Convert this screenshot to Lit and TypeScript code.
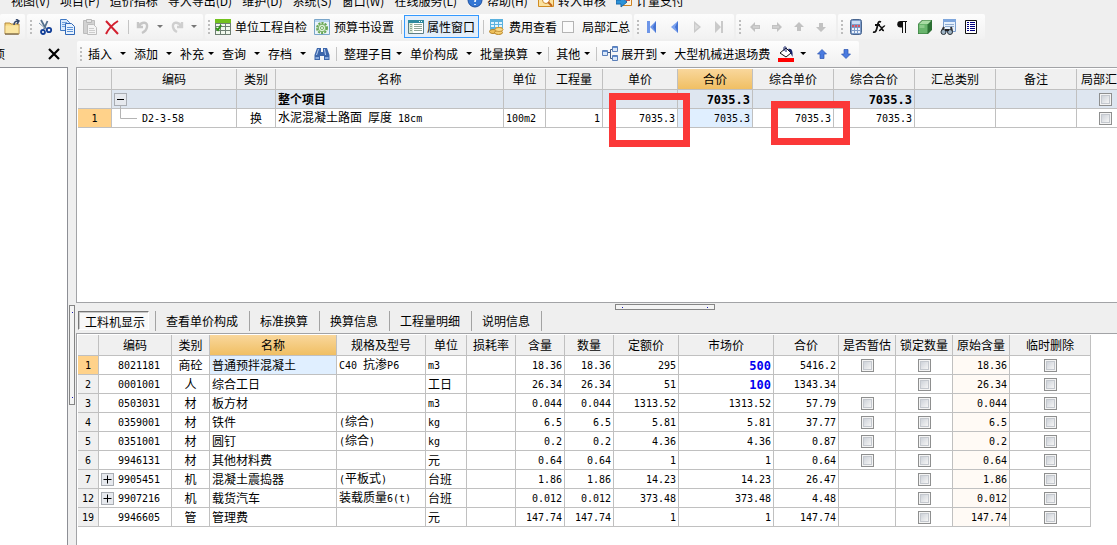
import { LitElement, html, svg, css, nothing, TemplateResult } from "lit";
import { customElement, state } from "lit/decorators.js";
import { classMap } from "lit/directives/class-map.js";
import { styleMap } from "lit/directives/style-map.js";

const shapes: Record<string, TemplateResult> = {
  folder: svg`<path d="M1 4h5l1 1h8v10H1z" fill="#f5d57c" stroke="#b58a3c"/><path d="M1.500 6.500h13v8h-13z" fill="#fbe6a2"/><path d="M10 6c0-3 1-4 4-4M12 0l3 2-2 3" fill="none" stroke="#34486b" stroke-width="1.500"/><path d="M1 15h13.500" stroke="#5d5140"/>`,
  cut: svg`<path d="M3 1l5 9M9.500 2L6 10" fill="none" stroke="#54718e" stroke-width="1.800"/><path d="M1 4l7 6" stroke="#7f97aa"/><circle cx="5" cy="13" r="2" fill="none" stroke="#123f98" stroke-width="1.800"/><circle cx="11" cy="11" r="2.200" fill="none" stroke="#123f98" stroke-width="1.800"/>`,
  copy: svg`<path d="M.5.500h6l3 3v8h-9z" fill="#d9e9fb" stroke="#3f78c3"/><path d="M2 3.500h5M2 5.500h5M2 7.500h5" stroke="#6fa0dc"/><path d="M5.500 4.500h6l3 3v8h-9z" fill="#e8f2fd" stroke="#3068b8"/><path d="M7 8.500h6M7 10.500h6M7 12.500h6" stroke="#5c92d6"/>`,
  paste: svg`<path d="M1.500 1.500h11v13h-11z" fill="#d2d2d2" stroke="#bcbcbc"/><path d="M4.500.500h5v3h-5z" fill="#e6e6e6" stroke="#b8b8b8"/><path d="M5.500 5.500h6l3 3v7h-9z" fill="#f4f4f4" stroke="#bebebe"/><path d="M7 9.500h5M7 11.500h6M7 13.500h6" stroke="#ccc"/>`,
  remove: svg`<path d="M2 2l12 13M14 2C9 5 5 9 2 15" fill="none" stroke="#d3202f" stroke-width="2"/>`,
  undo: svg`<path d="M3 3v5h5M3.500 7.500C7 2 13 3 12 8c-.5 3-3 5-5 6" fill="none" stroke="#c6c6c6" stroke-width="2.400"/>`,
  redo: svg`<path d="M13 3v5H8M12.500 7.500C9 2 3 3 4 8c.5 3 2 4 4 5" fill="none" stroke="#cfcfcf" stroke-width="2.400"/>`,
  sheet: svg`<path d="M0 1h16v15H0z" fill="#6e7f72"/><path d="M0 0h16v4H0z" fill="#72c21d"/><path d="M1 5h4v2H1zM6 5h4v2H6zM11 5h4v2h-4zM6 8h4v3H6zM11 8h4v3h-4zM6 12h4v3H6zM11 12h4v3h-4zM1 12h4v3H1z" fill="#f1f8ee"/><path d="M1 8h4v3H1z" fill="#fff"/><path d="M1 9l2 2 3-5" fill="none" stroke="#2f9415" stroke-width="1.800"/>`,
  gear: svg`<path d="M.5.500h15v15H.5z" fill="#eaf4fb" stroke="#79a5c9"/><path d="M1 1h14v2H1z" fill="#b6d6ef"/><circle cx="8" cy="9" r="5" fill="#fff" stroke="#68a755" stroke-width="2" stroke-dasharray="2.200 1"/><circle cx="8" cy="9" r="3.800" fill="#dff0d9" stroke="#6fac5d"/><circle cx="8" cy="9" r="1.500" fill="#fff" stroke="#6fac5d"/>`,
  panel: svg`<path d="M.5 1.500h15v13H.5z" fill="#fff" stroke="#5c7d84"/><path d="M0 1h16v3H0z" fill="#2f8aa0"/><path d="M1 4h4v10H1z" fill="#dcebd8"/><path d="M2 5.500h2M2 7.500h2M2 9.500h2M2 11.500h2M6 5.500h8M6 7.500h8M6 9.500h8M6 11.500h8" stroke="#8fa596"/><path d="M11 2.500h1M13 2.500h1" stroke="#fff"/>`,
  cost: svg`<path d="M1 0h13v11H1z" fill="#5ab2df"/><path d="M2 3h3v2H2zM6 3h3v2H6zM10 3h3v2h-3zM2 6h3v2H2zM6 6h3v2H6zM10 6h3v2h-3z" fill="#e2f4fd"/><ellipse cx="4" cy="12.500" rx="3.500" ry="2" fill="#efc05a" stroke="#b78427"/><path d="M7 8h6v6H7z" fill="#eab650"/><ellipse cx="9.500" cy="13.500" rx="4" ry="2" fill="#f4cc6f" stroke="#b78427"/><ellipse cx="10" cy="10.500" rx="4" ry="2" fill="#fbdc8b" stroke="#c7953a"/>`,
  first: svg`<path d="M2 2h3v12H2z" fill="#6e96e8"/><path d="M11 2v12L5 8z" fill="#6e96e8"/><path d="M11 2v12L8 8z" fill="#4473d2"/>`,
  prev: svg`<path d="M11 2v12L4 8z" fill="#7ba2ef"/><path d="M11 2v12L8 8z" fill="#4473d2"/>`,
  next: svg`<path d="M5 2v12l7-6z" fill="#cacaca"/><path d="M6 5v6l4-3z" fill="#dcdcdc"/>`,
  last: svg`<path d="M4 2v12l6-6zM10 2h2v12h-2z" fill="#cacaca"/>`,
  left: svg`<path d="M3 8l5-5v3h5v4H8v3z" fill="#c2c2c2"/><path d="M6 8h6" stroke="#dedede"/>`,
  right: svg`<path d="M13 8L8 3v3H3v4h5v3z" fill="#c2c2c2"/><path d="M4 8h6" stroke="#dedede"/>`,
  up: svg`<path d="M8 3l5 5h-3v4H6V8H3z" fill="#c2c2c2"/>`,
  down: svg`<path d="M8 13L3 8h3V4h4v4h3z" fill="#c2c2c2"/>`,
  calc: svg`<rect x="2.500" y=".5" width="11" height="15" rx="2" fill="#7d9bc8" stroke="#48658f"/><path d="M4 2h8v3H4z" fill="#c9dcf4"/><path d="M4 6h2v2H4zM7 6h2v2H7zM10 6h2v2h-2z" fill="#d65361"/><path d="M4 9h2v2H4zM7 9h2v2H7zM10 9h2v2h-2zM4 12h2v2H4zM7 12h2v2H7zM10 12h2v2h-2z" fill="#eaf2fc"/>`,
  fx: svg`<path d="M10 3c-3-1.500-3 2-3.800 5S5 14 2 13M4 6h5" fill="none" stroke="#111" stroke-width="1.800"/><path d="M8 7c3-1 2 5 5 4.500M14 7c-2-1-4 5-6 4.500" fill="none" stroke="#111" stroke-width="1.500"/>`,
  para: svg`<path d="M7 2.500h6M8.500 2v12M11.500 2v12" fill="none" stroke="#111"/><path d="M8 2H6.500a3 3 0 000 6.500H8z" fill="#111"/>`,
  cube: svg`<path d="M1 5l4-4h10v10l-4 4H1z" fill="#2c7034"/><path d="M1.500 5h9v9.500h-9z" fill="#69b56d"/><path d="M2 5l3.500-3.500h9L11 5z" fill="#a9dba4"/><path d="M2.500 6h5v3h-5z" fill="#8ccb8b"/>`,
  find: svg`<path d="M3.500.500h12v12h-12z" fill="#e7f1fb" stroke="#7c9fce"/><path d="M3 0h13v3H3z" fill="#7ea6dc"/><path d="M5 5.500h9M5 7.500h9" stroke="#90acd0"/><path d="M4 8l-2 4M11 8l1 4" stroke="#333" stroke-width="2"/><circle cx="3.500" cy="13" r="2.500" fill="#9fb4c4" stroke="#293038"/><circle cx="10" cy="13" r="2.500" fill="#9fb4c4" stroke="#293038"/><path d="M5 11h4" stroke="#222" stroke-width="2"/>`,
  list: svg`<path d="M2.500 1.500h11v13h-11z" fill="#fff" stroke="#111"/><path d="M4 3.500h2M4 5.500h2M4 7.500h2M4 9.500h2M4 11.500h2M7 3.500h5M7 5.500h5M7 7.500h5M7 9.500h5M7 11.500h5" stroke="#000080"/>`,
  binoc: svg`<path d="M3 2h4v4h2V2h4l2.500 7v5H10v-4H6v4H.5V9z" fill="#3c66ab"/><path d="M4 3h1l-2 6H2zM10 3h1l1 6h-1z" fill="#b7d0f2"/><path d="M1.500 11H5v2H1.500zM11 11h3.500v2H11z" fill="#87aade"/>`,
  tree: svg`<path d="M6 6.500h2.500V3.500H10M8.500 6v6.500H10" fill="none" stroke="#415b85"/><path d="M.5 4.500h5v5h-5zM10.500.500h5v5h-5zM10.500 9.500h5v5h-5z" fill="#dbe8f9" stroke="#5b7fb9"/><path d="M1 5h4v1H1zM11 1h4v1h-4zM11 10h4v1h-4z" fill="#5e8bd0"/>`,
  bucket: svg`<path d="M0 12h16v4H0z" fill="#f00"/><path d="M2 7l6-5 5 5-5 4z" fill="#fff" stroke="#111"/><path d="M6 5V1.500c0-1 2-1 2 0V6" fill="none" stroke="#16226a"/><path d="M10 3c4-1 5 2 4.500 8L12.500 7z" fill="#16226a"/>`,
  upBlue: svg`<path d="M8 3.500l4.500 4.500H10v4.500H6V8H3.500z" fill="#4a7be0" stroke="#2b55b0" stroke-width=".7"/>`,
  downBlue: svg`<path d="M8 12.500L3.500 8H6V3.500h4V8h2.500z" fill="#4a7be0" stroke="#2b55b0" stroke-width=".7"/>`,
  help: svg`<circle cx="8" cy="7" r="7" fill="#3477d4" stroke="#1f509f"/><path d="M6 5c0-3 5-3 4 0-1 2-2 1-2 4M8 11v1" fill="none" stroke="#fff" stroke-width="1.600"/>`,
  audit: svg`<path d="M.5 3.500h15v10H.5z" fill="#fbe2a0" stroke="#d18c22"/><circle cx="8" cy="7" r="3.500" fill="#fff" stroke="#cf8a26"/><path d="M10 9l4 4" stroke="#c0641e" stroke-width="2"/>`,
  pay: svg`<path d="M5.500 2.500h10v10h-10z" fill="#fff3dc" stroke="#cf8322"/><path d="M0 7h5V4l6 5-6 5v-3H0z" fill="#2c92d8" stroke="#1a66a6"/><path d="M10 5h4v3h-4z" fill="#c0524a"/>`,
  close: svg`<path d="M3 3l10 10M13 3L3 13" stroke="#000" stroke-width="2.200"/>`,
};

const icon = (name: string) =>
  html`<svg class="icon" viewBox="0 0 16 16" aria-hidden="true">${shapes[name]}</svg>`;

/** Latin runs use the fixed-pitch face, Chinese runs keep the grid face. */
const mixed = (text: string) =>
  text
    .split(/([\x20-\x7e]+)/)
    .map((run) => (/^[\x20-\x7e]+$/.test(run) ? html`<span class="latin">${run}</span>` : run));

type Column = { label: string; width: number; align?: "num" | "mid" | "left" | "check"; tint?: boolean };

const estimateColumns: Column[] = [
  { label: "编码", width: 125 },
  { label: "类别", width: 39, align: "mid" },
  { label: "名称", width: 228 },
  { label: "单位", width: 42 },
  { label: "工程量", width: 57, align: "num" },
  { label: "单价", width: 75, align: "num" },
  { label: "合价", width: 75, align: "num" },
  { label: "综合单价", width: 81, align: "num" },
  { label: "综合合价", width: 81, align: "num" },
  { label: "汇总类别", width: 81 },
  { label: "备注", width: 81 },
  { label: "局部汇总", width: 57, align: "check" },
];
const estimateRows = [
  ["", "", "", "整个项目", "", "", "", "7035.3", "", "7035.3", "", "", "0"],
  ["1", "D2-3-58", "换", "水泥混凝土路面 厚度 18cm", "100m2", "1", "7035.3", "7035.3", "7035.3", "7035.3", "", "", "0"],
];

const resourceColumns: Column[] = [
  { label: "编码", width: 73 },
  { label: "类别", width: 38, align: "mid" },
  { label: "名称", width: 127 },
  { label: "规格及型号", width: 89 },
  { label: "单位", width: 41 },
  { label: "损耗率", width: 49, align: "num" },
  { label: "含量", width: 49, align: "num" },
  { label: "数量", width: 49, align: "num" },
  { label: "定额价", width: 65, align: "num" },
  { label: "市场价", width: 95, align: "num" },
  { label: "合价", width: 65, align: "num" },
  { label: "是否暂估", width: 57, align: "check" },
  { label: "锁定数量", width: 57, align: "check" },
  { label: "原始含量", width: 57, align: "num", tint: true },
  { label: "临时删除", width: 81, align: "check" },
];
const resourceRows = [
  ["1", "8021181", "商砼", "普通预拌混凝土", "C40 抗渗P6", "m3", "", "18.36", "18.36", "295", "500", "5416.2", "0", "0", "18.36", "0"],
  ["2", "0001001", "人", "综合工日", "", "工日", "", "26.34", "26.34", "51", "100", "1343.34", "", "0", "26.34", "0"],
  ["3", "0503031", "材", "板方材", "", "m3", "", "0.044", "0.044", "1313.52", "1313.52", "57.79", "0", "0", "0.044", "0"],
  ["4", "0359001", "材", "铁件", "(综合)", "kg", "", "6.5", "6.5", "5.81", "5.81", "37.77", "0", "0", "6.5", "0"],
  ["5", "0351001", "材", "圆钉", "(综合)", "kg", "", "0.2", "0.2", "4.36", "4.36", "0.87", "0", "0", "0.2", "0"],
  ["6", "9946131", "材", "其他材料费", "", "元", "", "0.64", "0.64", "1", "1", "0.64", "0", "0", "0.64", "0"],
  ["7", "9905451", "机", "混凝土震捣器", "(平板式)", "台班", "", "1.86", "1.86", "14.23", "14.23", "26.47", "", "0", "1.86", "0"],
  ["12", "9907216", "机", "载货汽车", "装载质量6(t)", "台班", "", "0.012", "0.012", "373.48", "373.48", "4.48", "", "0", "0.012", "0"],
  ["19", "9946605", "管", "管理费", "", "元", "", "147.74", "147.74", "1", "1", "147.74", "", "0", "147.74", "0"],
];
const expandable = new Set(["7", "12"]);
const tabs = ["工料机显示", "查看单价构成", "标准换算", "换算信息", "工程量明细", "说明信息"];

@customElement("app-root")
export class AppRoot extends LitElement {
  @state() private tab = 0;

  static styles = css`
    :host {
      display: flex;
      flex-direction: column;
      height: 100vh;
      overflow: hidden;
      background: #efefef;
      color: #000;
      font: 12px/16px "Noto Sans CJK SC", sans-serif;
    }
    * { box-sizing: border-box; }
    button { font: inherit; color: inherit; background: none; border: 0; padding: 0; margin: 0; white-space: nowrap; }
    .icon { display: block; flex: none; width: 16px; height: 16px; }
    .latin { font: 10px/16px "DejaVu Sans Mono", monospace; white-space: pre; }

    .menu { display: flex; align-items: flex-end; gap: 10px; height: 14px; padding: 0 0 5px 11px; overflow: hidden; flex: none; }
    .menu button { display: flex; align-items: center; gap: 4px; flex: none; }
    .bars { display: flex; gap: 2px; height: 27px; flex: none; overflow: hidden; }
    .bars.second { height: 26px; }
    .bar { display: flex; align-items: center; height: 25px; padding: 0 5px 0 3px; border-radius: 2px; background: linear-gradient(#fdfdfd, #f1f1f1); flex: none; }
    .bar button { display: flex; align-items: center; gap: 4px; }
    .grip { width: 2px; height: 14px; background: repeating-linear-gradient(#bdbdbd 0 2px, transparent 2px 4px); }
    .rule { width: 1px; height: 14px; background: #c4c4c4; }
    .caret { width: 6px; height: 3px; flex: none; background: #000; clip-path: polygon(0 0, 100% 0, 50% 100%); }
    .dim .caret { background: #777; }
    .files { padding: 0 5px 0 4px; }
    .edit { gap: 6px; padding-right: 6px; }
    .edit .rule { margin-left: 2px; }
    .edit .dim { gap: 6px; }
    .checks { gap: 7px; padding-right: 2px; }
    .checks .grip { margin-right: -2px; }
    .checks .rule { margin-right: -2px; }
    .checks .pressed { gap: 3px; height: 23px; padding: 0 3px; border: 1px solid #3399ff; background: #e3eefa; margin: 0 -3px; }
    .tick { display: flex; align-items: center; gap: 8px; margin-left: -2px; }
    .tick input { appearance: none; width: 12px; height: 12px; margin: 0; border: 1px solid #b4b4b4; background: #fbfbfb; }
    .step { gap: 6px; width: 100px; }
    .tools { gap: 7px; padding-right: 6px; }
    .tools .grip { margin-right: -2px; }
    .side { display: flex; align-items: center; justify-content: space-between; width: 75px; height: 25px; padding-right: 13px; flex: none; overflow: hidden; }
    .side span { margin-left: -7px; }
    .commands { gap: 8px; }
    .commands .grip { margin-right: -2px; }
    .commands button { gap: 8px; }
    .commands .tight { gap: 4px; }
    .commands .expand { gap: 3px; margin-left: -2px; }
    .commands .fill { gap: 6px; }
    .commands .rule { margin: 0 -1px 0 -2px; }

    .work { display: flex; flex: 1; min-height: 0; }
    .outline { flex: none; width: 68px; background: #fff; border: solid #8d8f95; border-width: 1px 1px 0 0; }
    .vsplit { flex: none; width: 8px; padding: 238px 1px 0; }
    .handle { display: flex; justify-content: space-between; border: 1px solid #858585; background: #f4f4f4; }
    .handle i { width: 1px; height: 1px; background: #1a1ab0; }
    .vsplit .handle { flex-direction: column; align-items: center; width: 6px; height: 100px; padding: 6px 0; }
    .hsplit { height: 8px; padding-top: 1px; }
    .hsplit .handle { width: 100px; height: 6px; margin-left: 51.8%; padding: 2px 6px; }
    .panes { display: flex; flex-direction: column; flex: 1; min-width: 0; }
    .pane { position: relative; overflow: hidden; background: #fff; border: solid #a2a3a6; border-width: 1px 0 0 1px; padding: 1px 0 0 1px; }
    .upper { flex: 0 0 236px; border-bottom-width: 1px; }
    .lower { flex: 1; }
    .tabs { display: flex; height: 22px; padding-left: 2px; }
    .tabs button { height: 20px; padding: 0 11px 0 10px; border-right: 1px solid #a3a3a3; }
    .tabs .wrap { padding-right: 6px; border-right: 1px solid #a3a3a3; height: 20px; }
    .tabs .wrap button { height: 19px; padding: 2px 3px 0 6px; border: 1px solid #fff; }
    .tabs .wrap .on { border-color: #777 #fff #fff #777; background: #f8f8f8; box-shadow: inset 1px 1px #c8c8c8; }

    table { table-layout: fixed; border-collapse: separate; border-spacing: 0; width: min-content; }
    th, td { height: 19px; padding: 0 2px; border: solid #c0c0c0; border-width: 0 1px 1px 0; line-height: 16px; font-weight: 400; white-space: nowrap; overflow: hidden; text-align: left; }
    thead th { height: 21px; padding: 0; background: #f0f0f0; text-align: center; }
    thead .hot { background: linear-gradient(#f9d79c, #f0bf63); }
    tbody th { padding: 0; background: #f0f0f0; text-align: center; }
    tbody .here { background: #ffd28a; }
    .num { text-align: right; }
    .mid, .check { text-align: center; }
    .check { padding: 0; }
    .tint { background: #fffaf5; }
    .cell-on { background: #e0efff; }
    .total td { background: #dee6f0; font-weight: 700; }
    .total .latin, .set .latin { font-size: 12px; font-weight: 700; }
    .set { color: #0000f0; }
    .code { display: flex; align-items: center; gap: 4px; }
    .slot { width: 13px; height: 13px; flex: none; }
    .fold { display: block; width: 13px; height: 13px; border: 1px solid #a9adb3; background: #e6e9ee; }
    .fold svg { display: block; width: 11px; height: 11px; }
    .branch { display: block; flex: none; width: 24px; height: 18px; overflow: visible; }
    .estimate td { overflow: visible; }
    td input { appearance: none; display: block; width: 13px; height: 13px; margin: 0 auto; border: 1px solid #8e8f8f; background: linear-gradient(135deg, #c3c9d2, #f4f4f4 80%) padding-box; box-shadow: inset 0 0 0 1px #f4f4f4, inset 0 0 0 2px #c4c8ce; }
    .mark { position: absolute; border: 7px solid #fb3838; pointer-events: none; }
    .mark.unit { left: 532px; top: 25px; width: 81px; height: 54px; }
    .mark.combined { left: 694px; top: 33px; width: 79px; height: 44px; }
  `;

  private command(label: string, tight = false) {
    return html`<button class=${classMap({ tight })}>${label}<span class="caret"></span></button>`;
  }

  private tool(name: string, label: string) {
    return html`<button aria-label=${label}>${icon(name)}</button>`;
  }

  private fold(open: boolean) {
    return html`<button class="fold" aria-label=${open ? "折叠" : "展开"}>
      <svg viewBox="0 0 11 11"><path d=${open ? "M2 5.500h7" : "M1.500 5.500h8M5.500 1.500v8"} stroke="#000" /></svg>
    </button>`;
  }

  private grid(kind: "estimate" | "resource", first: number, cols: Column[], rows: string[][], hot: number) {
    const estimate = kind === "estimate";
    return html`<table class=${kind}>
      <colgroup>
        <col style=${styleMap({ width: `${first}px` })} />
        ${cols.map((c) => html`<col style=${styleMap({ width: `${c.width}px` })} />`)}
      </colgroup>
      <thead><tr>
        <th></th>
        ${cols.map((c, i) => html`<th scope="col" class=${classMap({ hot: i === hot })}>${c.label}</th>`)}
      </tr></thead>
      <tbody>
        ${rows.map((row) => {
          const total = row[0] === "";
          return html`<tr class=${classMap({ total })}>
            <th scope="row" class=${classMap({ here: row[0] === "1" })}>${mixed(row[0])}</th>
            ${cols.map((c, i) => {
              const value = row[i + 1];
              const classes = classMap({
                [c.align ?? "left"]: true,
                tint: !!c.tint,
                "cell-on": row[0] === "1" && i === hot,
                set: c.label === "市场价" && (row[0] === "1" || row[0] === "2"),
              });
              if (i === 0) {
                const lead = estimate
                  ? total
                    ? this.fold(true)
                    : html`<svg class="branch" viewBox="0 0 24 18"><path d="M6.500-3V9.500H23" fill="none" stroke="#b4b4b4" /></svg>`
                  : html`<span class="slot">${expandable.has(row[0]) ? this.fold(false) : nothing}</span>`;
                return html`<td class=${classes}><div class="code">${lead}<span>${mixed(value)}</span></div></td>`;
              }
              if (c.align === "check") {
                return html`<td class=${classes}>
                  ${value ? html`<input type="checkbox" aria-label=${`${c.label} ${row[0]}`} />` : nothing}
                </td>`;
              }
              return html`<td class=${classes}>${mixed(value)}</td>`;
            })}
          </tr>`;
        })}
      </tbody>
    </table>`;
  }

  private tabButton(i: number) {
    return html`<button role="tab" aria-selected=${this.tab === i} class=${classMap({ on: this.tab === i })}
      @click=${() => (this.tab = i)}>${tabs[i]}</button>`;
  }

  render() {
    return html`
      <nav class="menu">
        ${["视图(V)", "项目(P)", "造价指标", "导入导出(D)", "维护(D)", "系统(S)", "窗口(W)", "在线服务(L)"].map(
          (m) => html`<button>${m}</button>`
        )}
        <button>${icon("help")}帮助(H)</button>
        <button>${icon("audit")}转入审核</button>
        <button>${icon("pay")}计量支付</button>
      </nav>
      <div class="bars">
        <div class="bar files">${this.tool("folder", "打开")}</div>
        <div class="bar edit">
          <span class="grip"></span>
          ${this.tool("cut", "剪切")}${this.tool("copy", "复制")}${this.tool("paste", "粘贴")}${this.tool("remove", "删除")}
          <span class="rule"></span>
          <button class="dim" aria-label="撤销">${icon("undo")}<span class="caret"></span></button>
          <button class="dim" aria-label="重做">${icon("redo")}<span class="caret"></span></button>
        </div>
        <div class="bar checks">
          <span class="grip"></span>
          <button>${icon("sheet")}单位工程自检</button>
          <button>${icon("gear")}预算书设置</button>
          <span class="rule"></span>
          <button class="pressed">${icon("panel")}属性窗口</button>
          <span class="rule"></span>
          <button>${icon("cost")}费用查看</button>
          <label class="tick"><input type="checkbox" />局部汇总</label>
        </div>
        <div class="bar step">
          <span class="grip"></span>
          ${this.tool("first", "第一条")}${this.tool("prev", "上一条")}${this.tool("next", "下一条")}${this.tool("last", "最后一条")}
        </div>
        <div class="bar step">
          <span class="grip"></span>
          ${this.tool("left", "左移")}${this.tool("right", "右移")}${this.tool("up", "上移")}${this.tool("down", "下移")}
        </div>
        <div class="bar tools">
          <span class="grip"></span>
          ${this.tool("calc", "计算器")}${this.tool("fx", "函数")}${this.tool("para", "段落")}${this.tool("cube", "模型")}${this.tool("find", "查找")}${this.tool("list", "列表")}
        </div>
      </div>
      <div class="bars second">
        <div class="side"><span>项</span>${this.tool("close", "关闭")}</div>
        <div class="bar commands">
          <span class="grip"></span>
          ${this.command("插入")}${this.command("添加")}${this.command("补充", true)}${this.command("查询")}${this.command("存档")}
          ${this.tool("binoc", "查找")}
          <span class="rule"></span>
          ${this.command("整理子目", true)}${this.command("单价构成")}${this.command("批量换算")}
          <span class="rule"></span>
          ${this.command("其他", true)}
          <span class="rule"></span>
          <button class="expand">${icon("tree")}展开到<span class="caret"></span></button>
          <button>大型机械进退场费</button>
          <button class="fill" aria-label="填充颜色">${icon("bucket")}<span class="caret"></span></button>
          ${this.tool("upBlue", "上移")}${this.tool("downBlue", "下移")}
        </div>
      </div>
      <main class="work">
        <aside class="outline"></aside>
        <div class="vsplit"><div class="handle"><i></i><i></i></div></div>
        <div class="panes">
          <section class="pane upper">
            ${this.grid("estimate", 34, estimateColumns, estimateRows, 6)}
            <div class="mark unit"></div>
            <div class="mark combined"></div>
          </section>
          <div class="hsplit"><div class="handle"><i></i><i></i></div></div>
          <div class="tabs" role="tablist">
            <div class="wrap">${this.tabButton(0)}</div>
            ${[1, 2, 3, 4, 5].map((i) => this.tabButton(i))}
          </div>
          <section class="pane lower">${this.grid("resource", 21, resourceColumns, resourceRows, 2)}</section>
        </div>
      </main>
    `;
  }
}
